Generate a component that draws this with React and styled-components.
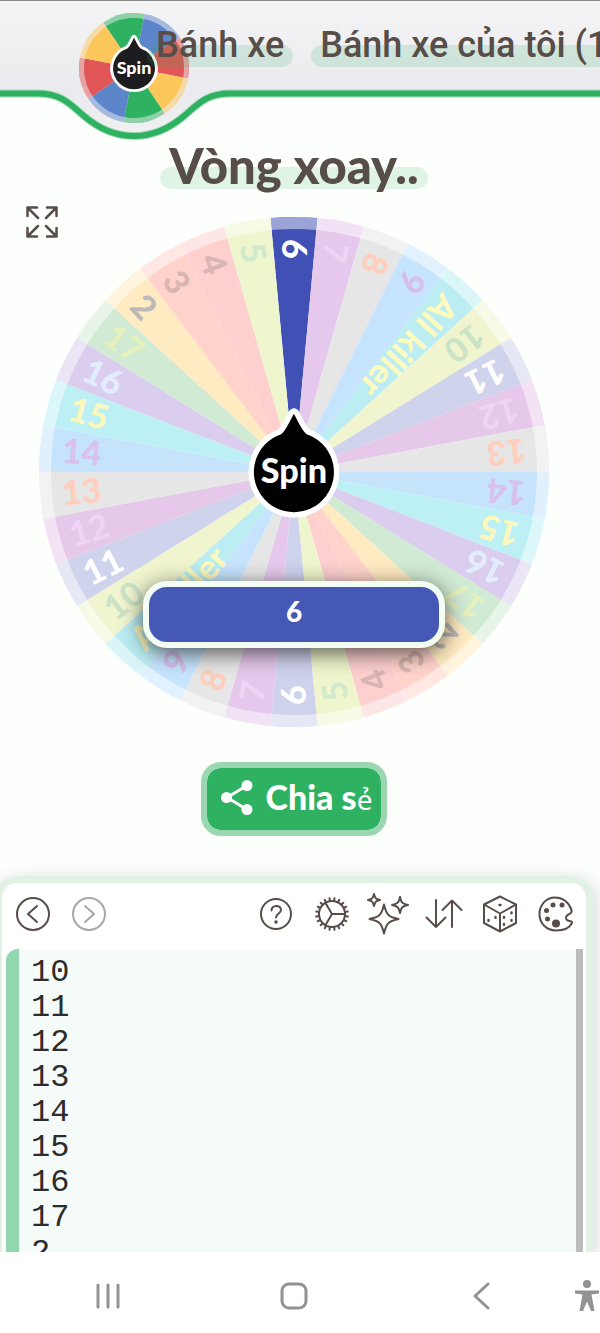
import React from 'react';
import styled, { createGlobalStyle } from 'styled-components';

const GlobalStyle = createGlobalStyle`
  * {
    box-sizing: border-box;
  }
  body {
    margin: 0;
    background: #fdfffc;
    color: #574d49;
    font-family: Lato, "Open Sans", sans-serif;
  }
  button {
    padding: 0;
    border: 0;
    background: none;
    color: inherit;
    font: inherit;
    cursor: pointer;
  }
`
const Page = styled.div`
  display: flex;
  flex-direction: column;
  min-height: 100vh;
  overflow: hidden;
`
const Header = styled.header`
  display: grid;
  height: 141px;
  border-top: 1px solid #88878a;
  > * {
    grid-area: 1 / 1;
  }
`
const Wave = styled.svg`
  width: 100%;
  height: 140px;
`
const Logo = styled.a`
  width: 112px;
  height: 112px;
  margin: 11px 0 0 78px;
`
const Nav = styled.nav`
  display: flex;
  align-items: flex-start;
  gap: 18px;
  padding: 22px 0 0 147px;
  overflow: hidden;
`
const NavLink = styled.a`
  position: relative;
  z-index: 0;
  flex: none;
  padding: 0 9px;
  color: #574d49;
  font: 500 36px/44px Roboto, sans-serif;
  text-decoration: none;
  white-space: nowrap;
  &::before {
    content: '';
    position: absolute;
    z-index: -1;
    inset: auto 0 0;
    height: 22px;
    border-radius: 11px;
    background: rgba(46, 177, 96, 0.16);
  }
`
const Main = styled.main`
  display: flex;
  flex-direction: column;
  align-items: center;
  padding-right: 12px;
`
const Title = styled.h1`
  position: relative;
  z-index: 0;
  margin: 0;
  padding: 0 9px;
  font-size: 49px;
  font-weight: 900;
  line-height: 48px;
  &::before {
    content: '';
    position: absolute;
    z-index: -1;
    inset: auto 0 0;
    height: 22px;
    border-radius: 11px;
    background: #dff4e5;
  }
`
const Stage = styled.section`
  position: relative;
  display: flex;
  justify-content: center;
  width: 100%;
  padding-top: 28px;
`
const WheelBox = styled.div`
  position: relative;
  width: 85vw;
  max-width: 510px;
`
const WheelSvg = styled.svg`
  display: block;
  width: 100%;
  font-size: 34px;
  font-weight: 900;
`
const ExpandButton = styled.button`
  position: absolute;
  left: 26px;
  top: 17px;
  width: 32px;
  height: 32px;
`
const SpinButton = styled.button`
  position: absolute;
  left: 41%;
  top: 36%;
  width: 18%;
`
const Winner = styled.output`
  position: absolute;
  left: 20%;
  right: 20%;
  top: 71%;
  max-width: 302px;
  height: 67px;
  margin: 2px auto 0;
  border: 6px solid #f3fdf3;
  border-radius: 24px;
  background: #4658b6;
  color: #fff;
  font-size: 28px;
  font-weight: 900;
  line-height: 48px;
  text-align: center;
  box-shadow: 0 5px 22px rgba(0, 0, 0, 0.65);
`
const ShareButton = styled.button`
  display: flex;
  align-items: center;
  gap: 13px;
  height: 74px;
  margin: 35px 0 40px;
  padding: 0 9px 4px 14px;
  border: 6px solid #9ad6b0;
  border-radius: 20px;
  background: #2eb160;
  background-clip: padding-box;
  color: #fff;
  font-size: 34px;
  font-weight: 900;
`
const Accent = styled.span`
  font-family: "Noto Sans", sans-serif;
  font-size: 28px;
  font-weight: 400;
`
const Panel = styled.section`
  flex: 1;
  display: flex;
  flex-direction: column;
  margin: 0 7px 0 -5px;
  border: 7px solid #e2f1e6;
  border-bottom: 0;
  border-radius: 22px 22px 0 0;
  background: #fff;
  box-shadow: 2px 4px 18px rgba(40, 40, 80, 0.2);
`
const Toolbar = styled.div`
  display: flex;
  height: 66px;
  padding: 0 2px 4px 3px;
`
const Tool = styled.button`
  display: flex;
  flex: none;
  align-items: center;
  justify-content: center;
  width: 56px;
  margin-left: ${(props) => (props.$push ? 'auto' : 0)};
  &:disabled {
    color: #a9a6a5;
    cursor: default;
  }
`
const Entries = styled.textarea`
  flex: 1;
  min-height: 303px;
  margin: 0 3px 0 4px;
  padding: 6px 12px 0;
  border: 0;
  border-left: 13px solid #92d6b0;
  border-right: 7px solid #b9bcba;
  border-top-left-radius: 12px;
  outline: 0;
  resize: none;
  overflow: hidden;
  background: #f5fbf8;
  color: #2c2c2c;
  font: 32px/35px "Liberation Mono", monospace;
`
const SystemBar = styled.footer`
  position: relative;
  display: grid;
  grid-template-columns: repeat(3, 1fr) 26px;
  height: 81px;
  padding: 6px 0 0 15px;
  background: #fff;
`
const SystemButton = styled.button`
  display: flex;
  align-items: center;
  justify-content: center;
  color: #929292;
`

const ENTRIES = [
  { label: '6', fill: '#cfd2ec', text: '#ffffff' },
  { label: '7', fill: '#e6c8ec', text: '#f1d4f5' },
  { label: '8', fill: '#e6e6e6', text: '#ffcfbd' },
  { label: '9', fill: '#c6e4fd', text: '#d5bfec' },
  { label: 'All killer', fill: '#bbedf3', text: '#fdfac0' },
  { label: '10', fill: '#f0f5cf', text: '#cce4c6' },
  { label: '11', fill: '#d0d3ec', text: '#ffffff' },
  { label: '12', fill: '#e6c8ea', text: '#f0d3f5' },
  { label: '13', fill: '#e6e6e6', text: '#ffcfbd' },
  { label: '14', fill: '#c6e3fc', text: '#d8c2ed' },
  { label: '15', fill: '#bcf0f4', text: '#fbf8bd' },
  { label: '16', fill: '#dacdee', text: '#e4edff' },
  { label: '17', fill: '#d1ead3', text: '#e4f1bc' },
  { label: '2', fill: '#ffebc1', text: '#bdb9b6' },
  { label: '3', fill: '#ffd3cb', text: '#d9b6b1' },
  { label: '4', fill: '#fdcfcf', text: '#d9b5b5' },
  { label: '5', fill: '#eff6cd', text: '#d0eacb' },
];
const LOGO_COLORS = ['#2eb160', '#5d85ca', '#e05656', '#fbc75b'];
const LINES = ['10', '11', '12', '13', '14', '15', '16', '17', '2', '3'];

// angles are in degrees, clockwise from the top
function slicePath(radius, from, to) {
  const point = (deg) => {
    const a = (deg * Math.PI) / 180;
    return `${(radius * Math.sin(a)).toFixed(2)} ${(-radius * Math.cos(a)).toFixed(2)}`;
  };
  return `M0 0L${point(from)}A${radius} ${radius} 0 0 1 ${point(to)}Z`;
}

function Hub({ size, fill }) {
  return (
    <svg viewBox="-47 -73 94 121" width={size} style={{ display: 'block' }}>
      <path
        d="M0 -60C4 -53 8 -43 13 -39A41 41 0 1 1 -13 -39C-8 -43 -4 -53 0 -60Z"
        fill={fill} stroke="#fff" strokeWidth="11" strokeLinejoin="round" paintOrder="stroke"
      />
      <text y="11" textAnchor="middle" fill="#fff" fontSize="35" fontWeight="900" fontFamily="Lato, sans-serif">Spin</text>
    </svg>
  )
}

function LogoWheel() {
  return (
    <svg viewBox="-56 -56 112 112" width="112" height="112">
      {[...LOGO_COLORS, ...LOGO_COLORS].map((color, i) => (
        <path key={i} d={slicePath(55, i * 45 - 34, i * 45 + 11)} fill={color} />
      ))}
      <circle r="52.5" fill="none" stroke="#f0f0f4" strokeOpacity="0.5" strokeWidth="5" />
      <svg x="-24" y="-37" width="48" height="62"><Hub size="48" fill="#1d1d20" /></svg>
    </svg>
  )
}

function Wheel() {
  const slices = [...ENTRIES, ...ENTRIES];
  const step = 360 / slices.length;
  return (
    <WheelSvg viewBox="-255 -255 510 510">
      {slices.map((slice, i) => (
        <path
          key={i}
          d={slicePath(255, (i - 0.5) * step, (i + 0.5) * step)}
          fill={i === 0 ? '#4150b5' : slice.fill}
        />
      ))}
      <circle r="249" fill="none" stroke="#fff" strokeOpacity="0.48" strokeWidth="12" />
      {slices.map((slice, i) => (
        <text key={i} x="-233" y="12" fill={slice.text} transform={`rotate(${i * step + 90})`}>
          {slice.label}
        </text>
      ))}
    </WheelSvg>
  )
}

function Icon({ w, h, sw = 2, children }) {
  return (
    <svg
      width={w} height={h} viewBox={`0 0 ${w} ${h}`} fill="none"
      stroke="currentColor" strokeWidth={sw} strokeLinecap="round" strokeLinejoin="round"
    >
      {children}
    </svg>
  )
}

const star = (x, y, r) => {
  const k = r * 0.3;
  return `M${x} ${y - r}Q${x + k * 0.5} ${y - k * 1.3} ${x + k} ${y - k}`
    + `Q${x + k * 1.3} ${y - k * 0.5} ${x + r} ${y}`
    + `Q${x + k * 1.3} ${y + k * 0.5} ${x + k} ${y + k}`
    + `Q${x + k * 0.5} ${y + k * 1.3} ${x} ${y + r}`
    + `Q${x - k * 0.5} ${y + k * 1.3} ${x - k} ${y + k}`
    + `Q${x - k * 1.3} ${y + k * 0.5} ${x - r} ${y}`
    + `Q${x - k * 1.3} ${y - k * 0.5} ${x - k} ${y - k}`
    + `Q${x - k * 0.5} ${y - k * 1.3} ${x} ${y - r}Z`;
};

function GearIcon() {
  return (
    <Icon w={36} h={36}>
      <circle cx="18" cy="18" r="13" />
      {Array.from({ length: 20 }, (_, i) => (
        <path key={i} d="M18 4.5V2" transform={`rotate(${i * 18 + 9} 18 18)`} />
      ))}
      <path d="M18 18H31M18 18L11.5 7M18 18L11.5 29" />
    </Icon>
  )
}

function DiceIcon() {
  return (
    <Icon w={36} h={38}>
      <path d="M18 1.5L34 9.5V28L18 36.5L2 28V9.5ZM2 9.5L18 18.5L34 9.5M18 18.5V36" />
      <path d="M17.5 10h1M6.5 25v.8M13.5 22v.8M22 22v.8M22 29v.8M29.5 17.5v.8M29.5 25v.8" strokeWidth="2.5" />
    </Icon>
  )
}

function PaletteIcon() {
  return (
    <Icon w={36} h={36}>
      <path d="M33.5 14C31 6 24.5 1.5 17 1.5C8 1.5 1.5 9 1.5 18C1.5 27.5 8.5 34.500 18 34.5C25 34.5 31.5 32 34 27C34.5 25.5 33 25.5 31.5 25C28.5 24.5 26.5 22 29 19.5C31 17.5 34.5 18 33.5 14Z" />
      <g fill="currentColor" stroke="none">
        <circle cx="15" cy="9" r="2.5" />
        <circle cx="24" cy="9" r="2.5" />
        <circle cx="8.5" cy="14.5" r="2.5" />
        <circle cx="9.5" cy="23" r="2.5" />
        <circle cx="18" cy="27.5" r="4" />
      </g>
    </Icon>
  )
}

function App() {
  const [text, setText] = React.useState(LINES.join('\n'));

  const handleChange = React.useCallback((event) => {
    setText(event.target.value);
  }, []);

  return (
    <Page>
      <GlobalStyle />
      <Header>
        <Wave aria-hidden="true">
          <defs>
            <linearGradient id="bar" x1="0" y1="0" x2="0" y2="1">
              <stop offset="0" stopColor="#f5f5f6" />
              <stop offset="0.7" stopColor="#ebebef" />
              <stop offset="1" stopColor="#f1f1f4" />
            </linearGradient>
          </defs>
          <path
            d="M-10 -10V92.5H38C62 92.5 71 104 84 115C98 127 114 135 134 135C154 135 170 127 184 115C197 104 206 92.5 230 92.5H4000V-10Z"
            fill="url(#bar)" stroke="#a6dcba" strokeWidth="8"
          />
          <path
            d="M-10 92.5H38C62 92.5 71 104 84 115C98 127 114 135 134 135C154 135 170 127 184 115C197 104 206 92.5 230 92.5H4000"
            fill="none" stroke="#2eb160" strokeWidth="6"
          />
        </Wave>
        <Logo href="#home" aria-label="Spin"><LogoWheel /></Logo>
        <Nav>
          <NavLink href="#wheel">Bánh xe</NavLink>
          <NavLink href="#mine">Bánh xe của tôi (1)</NavLink>
        </Nav>
      </Header>
      <Main>
        <Title>Vòng xoay..</Title>
        <Stage>
          <ExpandButton aria-label="Toàn màn hình">
            <Icon w={32} h={32} sw={2.5}>
              <path d="M1.5 10V1.5H11M1.5 1.5L12 12M21 1.5H30.5V10M30.500 1.5L20 12M1.5 22V30.5H11M1.5 30.5L12 20M21 30.5H30.5V22M30.5 30.5L20 20" />
            </Icon>
          </ExpandButton>
          <WheelBox>
            <Wheel />
            <SpinButton><Hub size="100%" fill="#000" /></SpinButton>
            <Winner>6</Winner>
          </WheelBox>
        </Stage>
        <ShareButton>
          <Icon w={32} h={35} sw={3}>
            <path d="M26 5.5L6 17.5L26 29.5" />
            <g fill="currentColor" stroke="none">
              <circle cx="26" cy="5.5" r="5.5" />
              <circle cx="5.5" cy="17.5" r="5.5" />
              <circle cx="26" cy="29.5" r="5.5" />
            </g>
          </Icon>
          <span>Chia s<Accent>ẻ</Accent></span>
        </ShareButton>
      </Main>
      <Panel>
        <Toolbar>
          <Tool aria-label="Hoàn tác">
            <Icon w={34} h={34}><circle cx="17" cy="17" r="16" /><path d="M21 9L12 17L21 25" /></Icon>
          </Tool>
          <Tool aria-label="Làm lại" disabled>
            <Icon w={34} h={34}><circle cx="17" cy="17" r="16" /><path d="M13 9L22 17L13 25" /></Icon>
          </Tool>
          <Tool aria-label="Trợ giúp" $push>
            <Icon w={32} h={32}>
              <circle cx="16" cy="16" r="15" />
              <path d="M11.5 12.5C11.5 6.5 21 6.5 21 12C21 15.5 16 15.5 16 19.5" />
              <circle cx="16" cy="24" r="0.8" fill="currentColor" />
            </Icon>
          </Tool>
          <Tool aria-label="Cài đặt"><GearIcon /></Tool>
          <Tool aria-label="Hiệu ứng">
            <Icon w={42} h={42}><path d={star(17, 26, 14.5)} /><path d={star(7, 7, 6)} /><path d={star(33, 12, 8)} /></Icon>
          </Tool>
          <Tool aria-label="Sắp xếp">
            <Icon w={38} h={30}><path d="M11 1V28M1.5 18.5L11 28L20.5 18.5M27 28V1.5M17.5 11L27 1.5L36.5 11" /></Icon>
          </Tool>
          <Tool aria-label="Xáo trộn"><DiceIcon /></Tool>
          <Tool aria-label="Màu sắc"><PaletteIcon /></Tool>
        </Toolbar>
        <Entries aria-label="Danh sách" rows="8" spellCheck="false" value={text} onChange={handleChange} />
      </Panel>
      <SystemBar>
        <SystemButton aria-label="Gần đây">
          <Icon w={26} h={26} sw={3}><path d="M3 2V24M13 2V24M23 2V24" /></Icon>
        </SystemButton>
        <SystemButton aria-label="Trang chủ">
          <Icon w={28} h={28} sw={3}><rect x="2" y="2" width="24" height="24" rx="7" /></Icon>
        </SystemButton>
        <SystemButton aria-label="Quay lại">
          <Icon w={18} h={28} sw={3}><path d="M16 2L3 14L16 26" /></Icon>
        </SystemButton>
        <SystemButton aria-label="Trợ năng">
          <svg width="26" height="32" viewBox="0 0 26 32" fill="currentColor">
            <circle cx="13" cy="4" r="4" />
            <path d="M1 10.5H25V13.5L17.5 14.5L20.5 31H17L13 21.5L9 31H5.5L8.5 14.5L1 13.5Z" />
          </svg>
        </SystemButton>
      </SystemBar>
    </Page>
  )
}

export default App;
